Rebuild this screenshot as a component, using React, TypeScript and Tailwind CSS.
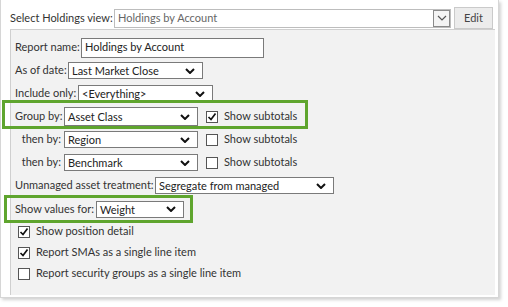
import React from 'react';

const Chevron = ({ thin }: { thin?: boolean }) => (
  <svg width="10" height="6" viewBox="0 0 10 6" className="shrink-0">
    <polyline
      points="1,1 5,5 9,1"
      fill="none"
      stroke={thin ? '#555' : '#111'}
      strokeWidth={thin ? 1.2 : 2}
    />
  </svg>
);

const Select = ({ value, w, h = 'h-[17px]' }: { value: string; w: string; h?: string }) => (
  <div className={`${w} ${h} shrink-0 flex items-center justify-between bg-white border border-[#7a7a7a] pl-[3px] pr-[7px]`}>
    <span className="leading-none text-[#222] whitespace-nowrap">{value}</span>
    <Chevron />
  </div>
);

const Check = ({ checked }: { checked?: boolean }) => (
  <div className="w-[12px] h-[12px] border border-[#555] bg-white flex items-center justify-center shrink-0">
    {checked && (
      <svg width="10" height="10" viewBox="0 0 10 10">
        <polyline points="1.5,5 4,7.5 8.5,1.5" fill="none" stroke="#111" strokeWidth="1.7" />
      </svg>
    )}
  </div>
);

const Row = ({ children, h = 'h-[23px]', className = '' }: { children: React.ReactNode; h?: string; className?: string }) => (
  <div className={`${h} flex items-center whitespace-nowrap ${className}`}>{children}</div>
);

export default function App() {
  return (
    <div
      className="w-[508px] h-[307px] bg-white relative overflow-hidden text-[11px] text-[#333]"
      style={{ fontFamily: 'Lato, "Open Sans", sans-serif' }}
    >
      <div className="w-[499px] h-[298px] bg-white border-x border-b border-[#d6d6d6] shadow-[2px_2px_3px_rgba(0,0,0,0.18)] flex flex-col">
        {/* header */}
        <div className="h-[29px] pt-[7px] flex items-center pl-[9px] whitespace-nowrap">
          <span className="w-[100px] mr-[4px]">Select Holdings view:</span>
          <div className="w-[337px] h-[19px] bg-white border border-[#bdbdbd] flex items-center justify-between pl-[3px]">
            <span className="text-[#666]">Holdings by Account</span>
            <div className="w-[17px] h-[17px] border border-[#8a8a8a] bg-[#f4f4f4] flex items-center justify-center">
              <Chevron thin />
            </div>
          </div>
          <div className="ml-[3px] w-[39px] h-[22px] bg-[#ececec] border border-[#cacaca] flex items-center justify-center text-[#444]">
            Edit
          </div>
        </div>

        {/* panel */}
        <div className="ml-[9px] w-[485px] h-[266px] bg-[#f2f2f2] border-t border-l border-[#cfcfcf] pl-[4px] pt-[6px] flex flex-col">
          <Row>
            <span className="w-[63px] mr-[3px]">Report name:</span>
            <div className="w-[183px] h-[20px] bg-white border border-[#7a7a7a] flex items-center pl-[3px] text-[#222]">
              Holdings by Account
            </div>
          </Row>
          <Row>
            <span className="w-[50px] mr-[3px]">As of date:</span>
            <Select value="Last Market Close" w="w-[135px]" />
          </Row>
          <Row>
            <span className="w-[60px] mr-[3px]">Include only:</span>
            <Select value="<Everything>" w="w-[135px]" />
          </Row>
          <Row>
            <span className="w-[46px] mr-[3px]">Group by:</span>
            <Select value="Asset Class" w="w-[134px]" h="h-[19px]" />
            <div className="ml-[8px] flex items-center gap-[6px]">
              <Check checked />
              <span>Show subtotals</span>
            </div>
          </Row>
          <Row>
            <span className="w-[46px] mr-[3px] text-right">then by:</span>
            <Select value="Region" w="w-[134px]" />
            <div className="ml-[8px] flex items-center gap-[6px]">
              <Check />
              <span>Show subtotals</span>
            </div>
          </Row>
          <Row>
            <span className="w-[46px] mr-[3px] text-right">then by:</span>
            <Select value="Benchmark" w="w-[134px]" />
            <div className="ml-[8px] flex items-center gap-[6px]">
              <Check />
              <span>Show subtotals</span>
            </div>
          </Row>
          <Row>
            <span className="w-[137px] mr-[3px]">Unmanaged asset treatment:</span>
            <Select value="Segregate from managed" w="w-[179px]" />
          </Row>
          <Row h="h-[24px]">
            <span className="w-[78px] mr-[3px]">Show values for:</span>
            <Select value="Weight" w="w-[88px]" />
          </Row>
          <Row h="h-[21px]" className="pl-[3px] gap-[6px]">
            <Check checked />
            <span>Show position detail</span>
          </Row>
          <Row h="h-[21px]" className="pl-[3px] gap-[6px]">
            <Check checked />
            <span>Report SMAs as a single line item</span>
          </Row>
          <Row h="h-[21px]" className="pl-[3px] gap-[6px]">
            <Check />
            <span>Report security groups as a single line item</span>
          </Row>
        </div>
      </div>

      {/* highlight boxes */}
      <div className="absolute left-[2px] top-[100px] w-[306px] h-[29px] border-[3px] border-[#5fa52e]" />
      <div className="absolute left-[4px] top-[195px] w-[189px] h-[28px] border-[3px] border-[#5fa52e]" />
    </div>
  );
}
